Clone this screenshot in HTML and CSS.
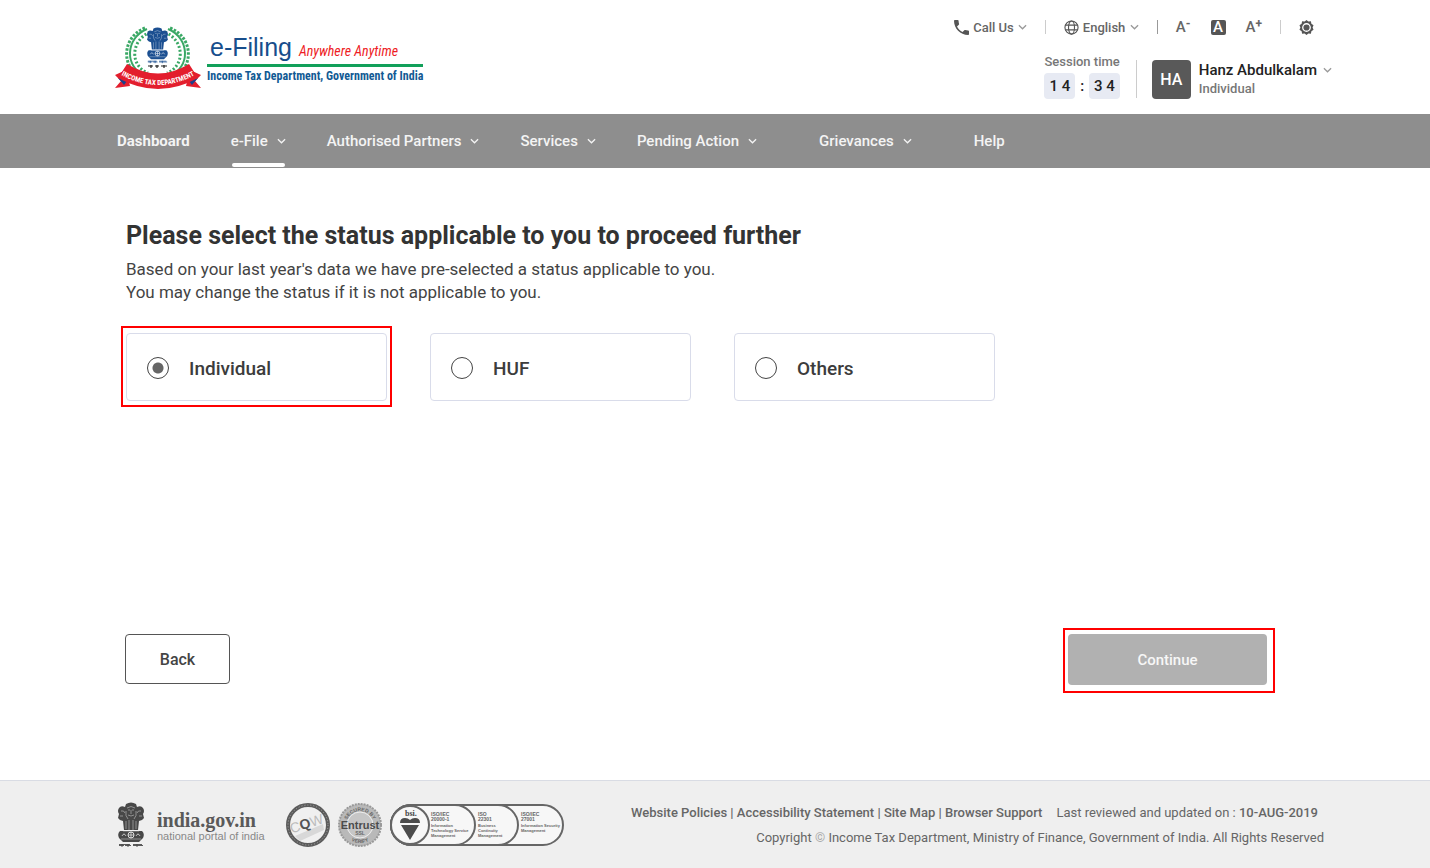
FILE: index.html
```
<!DOCTYPE html>
<html lang="en">
<head>
    <meta charset="UTF-8">
    <meta name="viewport" content="width=device-width, initial-scale=1.0">
    <title>e-Filing - Income Tax Department, Government of India</title>
    <link rel="stylesheet" href="styles.css">
</head>
<body>
    <!-- Shared shapes -->
    <svg class="sprite" aria-hidden="true">
        <symbol id="chevron" viewBox="0 0 10 6">
            <path d="M1 1l4 4 4-4" fill="none" stroke="currentColor" stroke-width="1.4"/>
        </symbol>
        <symbol id="lions" viewBox="0 0 28 46">
            <path d="M9 2q5-3 10 0l1 3q4-2 6 1 2 3 0 6l1 4q-2 3-5 3l-1 9H7l-1-9q-3 0-5-3l1-4q-2-3 0-6 2-3 6-1z" fill="currentColor"/>
            <path d="M3 29q-3 3-1 7l4 4h16l4-4q2-4-1-7z" fill="currentColor"/>
            <path d="M10 6q4-3 8 0M11 8h2M15 8h2M14 8v4M11 13q3 2 6 0M9 9q-1 5 2 8M19 9q1 5-2 8M4 9q3-1 4 2M24 9q-3-1-4 2M3 14h3M25 14h-3M9 19v8M12 18v10M16 18v10M19 19v8M6 29h16M4 37h20" fill="none" stroke="#fff" stroke-opacity=".5" stroke-width=".8"/>
            <circle cx="14" cy="33" r="3" fill="none" stroke="#fff" stroke-opacity=".8"/>
            <path d="M14 30v6M11 33h6M5 34q2-4 4 0M19 34q2-4 4 0" fill="none" stroke="#fff" stroke-opacity=".8" stroke-width=".8"/>
            <path d="M2 43.500h5M8 43.500h6M16 43.500h10M2 42.500h11M16 42.500h9M5 42v3M11 42v3M20 42v3" fill="none" stroke="currentColor" stroke-width=".9"/>
        </symbol>
    </svg>

    <header class="header">
        <a class="logo" href="#">
            <svg class="logo-emblem" viewBox="0 0 86 64" role="img" aria-label="Income Tax Department emblem">
                <g fill="none" stroke="#3aa865">
                    <path d="M32 3C10 12 9 42 31 50l19 6M53 3c22 9 23 39 1 47l-19 6" stroke-width="2"/>
                    <path d="M30 2C5 12 6 45 30 53M55 2c25 10 24 43 0 51" stroke-width="3" stroke-dasharray="2.500 1.500"/>
                    <path d="M35 6C15 15 15 40 33 47M50 6c20 9 20 34 2 41" stroke-width="3" stroke-dasharray="2 2"/>
                </g>
                <svg class="blue" x="30" y="1" width="25" height="37"><use href="#lions"/></svg>
                <path d="M33 40h5M40 40h4M46 40h6M36 39v3M42 39v3M49 39v3" stroke="#222" stroke-width="1.200"/>
                <path d="M0 49l11-5 4 16-15 2 6-7zM86 49l-11-5-4 16 15 2-6-7z" fill="#e31e2d"/>
                <path d="M3 52l9 3-3 4zM83 52l-9 3 3 4z" fill="#1d3f8a"/>
                <path d="M12 38q31 19 62 0l9 14q-40 22-80 0z" fill="#e31e2d"/>
                <path id="ribbon" d="M6 49q37 20 74 0" fill="none"/>
                <text class="ribbon-text"><textPath href="#ribbon" startOffset="50%">INCOME TAX DEPARTMENT</textPath></text>
            </svg>
            <span class="logo-text">
                <span class="logo-title">e-Filing <em>Anywhere Anytime</em></span>
                <span class="logo-dept">Income Tax Department, Government of India</span>
            </span>
        </a>

        <div class="header-right">
            <div class="tools">
                <button class="tool" type="button">
                    <svg class="icon" viewBox="3 3 18 18"><path fill="currentColor" d="M6.620 10.790c1.440 2.830 3.760 5.140 6.590 6.590l2.200-2.200c.27-.27.67-.36 1.020-.24 1.120.37 2.330.57 3.570.57.55 0 1 .45 1 1V20c0 .55-.45 1-1 1C10.610 21 3 13.390 3 4c0-.55.45-1 1-1h3.500c.55 0 1 .45 1 1 0 1.250.2 2.450.57 3.570.11.35.03.74-.25 1.020z"/></svg>
                    Call Us
                    <svg class="chevron"><use href="#chevron"/></svg>
                </button>
                <span class="divider"></span>
                <label class="tool">
                    <svg class="icon" viewBox="0 0 16 16" fill="none" stroke="currentColor" stroke-width="1.200">
                        <circle cx="8" cy="8" r="7"/>
                        <ellipse cx="8" cy="8" rx="3.200" ry="7"/>
                        <path d="M1.500 5.500h13M1.500 10.500h13"/>
                    </svg>
                    <select class="language" aria-label="Language">
                        <option>English</option>
                    </select>
                    <svg class="chevron"><use href="#chevron"/></svg>
                </label>
                <span class="divider dark"></span>
                <div class="font-sizes">
                    <button class="size" type="button" aria-label="Decrease font size">A<sup>-</sup></button>
                    <button class="size normal" type="button" aria-label="Normal font size">A</button>
                    <button class="size" type="button" aria-label="Increase font size">A<sup>+</sup></button>
                </div>
                <span class="divider"></span>
                <button class="tool" type="button" aria-label="Contrast">
                    <svg class="icon" viewBox="0 0 16 16">
                        <path fill="currentColor" d="M8 0l2 1.700 2.700-.3.500 2.600L15.500 5.500 14.500 8l1 2.500-2.300 1.500-.5 2.600-2.700-.3L8 16l-2-1.700-2.700.3-.5-2.600L.5 10.500l1-2.500-1-2.500L2.800 4l.5-2.600 2.700.3z"/>
                        <circle cx="8" cy="8" r="4" fill="none" stroke="#fff" stroke-width="1.400"/>
                    </svg>
                </button>
            </div>

            <div class="account">
                <div class="session">
                    <span>Session time</span>
                    <div class="timer"><b>1 4</b>:<b>3 4</b></div>
                </div>
                <button class="profile" type="button">
                    <span class="avatar">HA</span>
                    <span class="profile-text">
                        <span class="profile-name">Hanz Abdulkalam <svg class="chevron"><use href="#chevron"/></svg></span>
                        <span class="profile-type">Individual</span>
                    </span>
                </button>
            </div>
        </div>
    </header>

    <nav class="nav">
        <a class="bold" href="#">Dashboard</a>
        <a class="active" href="#">e-File <svg class="chevron"><use href="#chevron"/></svg></a>
        <a href="#">Authorised Partners <svg class="chevron"><use href="#chevron"/></svg></a>
        <a href="#">Services <svg class="chevron"><use href="#chevron"/></svg></a>
        <a href="#">Pending Action <svg class="chevron"><use href="#chevron"/></svg></a>
        <a class="spaced" href="#">Grievances <svg class="chevron"><use href="#chevron"/></svg></a>
        <a class="spaced" href="#">Help</a>
    </nav>

    <main class="main">
        <h1>Please select the status applicable to you to proceed further</h1>
        <p>Based on your last year's data we have pre-selected a status applicable to you.<br>
        You may change the status if it is not applicable to you.</p>

        <div class="options" role="radiogroup" aria-label="Status">
            <div class="frame highlight">
                <label class="option"><input type="radio" name="status" checked> Individual</label>
            </div>
            <div class="frame">
                <label class="option"><input type="radio" name="status"> HUF</label>
            </div>
            <div class="frame">
                <label class="option"><input type="radio" name="status"> Others</label>
            </div>
        </div>

        <div class="actions">
            <button class="back" type="button">Back</button>
            <div class="frame highlight next">
                <button class="continue" type="button">Continue</button>
            </div>
        </div>
    </main>

    <footer class="footer">
        <div class="badges">
            <a class="portal" href="#">
                <svg class="portal-emblem"><use href="#lions"/></svg>
                <span class="portal-text">
                    <b>india.gov.in</b>
                    <span>national portal of india</span>
                </span>
            </a>
            <svg class="seal" viewBox="0 0 44 44" role="img" aria-label="CQW certified">
                <circle cx="22" cy="22" r="20" fill="#f0f0f0" stroke="#5c5c5c" stroke-width="4"/>
                <circle cx="22" cy="22" r="20" fill="none" stroke="#aaa" stroke-dasharray="1 2"/>
                <path d="M9 33L37 21l1 6L14 38z" fill="#d8d8d8"/>
                <g transform="rotate(-18 22 22)">
                    <text class="cqw" x="21" y="25">C<tspan class="q">Q</tspan>W</text>
                </g>
            </svg>
            <svg class="seal" viewBox="0 0 44 44" role="img" aria-label="Secured by Entrust">
                <circle cx="22" cy="22" r="21" fill="#b9b9b9" stroke="#999" stroke-width="2" stroke-dasharray="2 1"/>
                <circle cx="22" cy="22" r="13" fill="#c6c6c6" stroke="#eee"/>
                <path id="arc-top" d="M8 22a14 14 0 0 1 28 0" fill="none"/>
                <path id="arc-bottom" d="M4 22a18 18 0 0 0 36 0" fill="none"/>
                <text class="seal-text"><textPath href="#arc-top" startOffset="50%">SECURED BY</textPath></text>
                <text class="entrust" x="22" y="26">Entrust</text>
                <text class="seal-text" x="22" y="32">SSL</text>
                <text class="seal-text"><textPath href="#arc-bottom" startOffset="50%">VERIFY</textPath></text>
            </svg>
            <svg class="bsi" viewBox="0 0 174 42" role="img" aria-label="bsi ISO certifications">
                <g fill="#f7f7f7" stroke="#666" stroke-width="2">
                    <rect x="1" y="1" width="172" height="40" rx="20"/>
                    <rect x="1" y="1" width="127" height="40" rx="20"/>
                    <rect x="1" y="1" width="84" height="40" rx="20"/>
                    <circle cx="20" cy="21" r="19"/>
                </g>
                <text class="bsi-name" x="15" y="12">bsi.</text>
                <path d="M10 19q0-5 5-5 3 0 5 2 2-2 5-2 5 0 5 5zM11 21h18l-9 15z" fill="#4c4c4c"/>
                <g class="bsi-text">
                    <text x="41" y="12">ISO/IEC</text><text x="41" y="17">20000-1</text>
                    <text class="small" x="41" y="23">Information</text><text class="small" x="41" y="28">Technology Service</text><text class="small" x="41" y="33">Management</text>
                    <text x="88" y="12">ISO</text><text x="88" y="17">22301</text>
                    <text class="small" x="88" y="23">Business</text><text class="small" x="88" y="28">Continuity</text><text class="small" x="88" y="33">Management</text>
                    <text x="131" y="12">ISO/IEC</text><text x="131" y="17">27001</text>
                    <text class="small" x="131" y="23">Information Security</text><text class="small" x="131" y="28">Management</text>
                </g>
            </svg>
        </div>

        <div class="footer-text">
            <div class="links">
                <div><a href="#">Website Policies</a> | <a href="#">Accessibility Statement</a> | <a href="#">Site Map</a> | <a href="#">Browser Support</a></div>
                <span>Last reviewed and updated on : <b>10-AUG-2019</b></span>
            </div>
            <div class="copyright">Copyright <span>©</span> Income Tax Department, Ministry of Finance, Government of India. All Rights Reserved</div>
        </div>
    </footer>
</body>
</html>
```
FILE: styles.css
```
* {
    box-sizing: border-box;
}

body {
    margin: 0;
    min-height: 100vh;
    display: flex;
    flex-direction: column;
    font-family: Roboto, sans-serif;
    color: #333;
    background: #fff;
}

a {
    color: inherit;
    text-decoration: none;
}

button,
select {
    font: inherit;
    color: inherit;
    background: none;
    border: none;
    padding: 0;
    cursor: pointer;
}

.sprite {
    display: none;
}

.chevron {
    width: 9px;
    height: 6px;
    flex: none;
}

/* Header */
.header {
    display: flex;
    justify-content: space-between;
    height: 114px;
    padding: 16px 98px 0 115px;
}

.logo {
    display: flex;
    align-items: flex-start;
    gap: 6px;
    padding-top: 10px;
}

.logo-emblem {
    width: 86px;
    height: 64px;
}

.blue {
    color: #1b4f91;
}

.ribbon-text {
    font: bold 7px "Roboto Condensed", Roboto, sans-serif;
    fill: #fff;
    text-anchor: middle;
}

.logo-text {
    display: flex;
    flex-direction: column;
    padding-top: 8px;
    white-space: nowrap;
}

.logo-title {
    padding: 0 3px;
    font-family: "Liberation Sans", sans-serif;
    font-size: 25px;
    line-height: 26px;
    height: 33px;
    color: #174e8c;
    border-bottom: 3px solid #12a05a;
}

.logo-title em {
    font-family: "Roboto Condensed", Roboto, sans-serif;
    font-size: 14px;
    color: #ee1c25;
}

.logo-dept {
    font-family: "Roboto Condensed", Roboto, sans-serif;
    font-size: 12px;
    font-weight: bold;
    line-height: 18px;
    color: #125a94;
}

.header-right {
    display: flex;
    flex-direction: column;
    align-items: flex-end;
    gap: 16px;
}

.tools {
    display: flex;
    align-items: center;
    gap: 18px;
    height: 22px;
    padding-right: 18px;
    font-size: 13px;
    font-weight: 500;
    color: #666;
}

.tool {
    display: flex;
    align-items: center;
    gap: 4px;
}

.icon {
    width: 15px;
    height: 15px;
    color: #555;
}

.tools .chevron,
.profile .chevron {
    color: #999;
}

.language {
    appearance: none;
}

.divider {
    width: 1px;
    height: 14px;
    background: #ccc;
}

.divider.dark {
    background: #999;
}

.font-sizes {
    display: flex;
    align-items: center;
    gap: 20px;
}

.size {
    display: flex;
    font-size: 15px;
    line-height: 15px;
    font-weight: 500;
}

.size sup {
    font-size: 12px;
    font-weight: bold;
    line-height: 8px;
}

.size.normal {
    width: 15px;
    justify-content: center;
    border-radius: 2px;
    color: #fff;
    background: #555;
}

.account {
    display: flex;
    gap: 16px;
}

.session {
    display: flex;
    flex-direction: column;
    gap: 3px;
    font-size: 13px;
    font-weight: 500;
    line-height: 16px;
    color: #777;
}

.timer {
    display: flex;
    justify-content: space-between;
    align-items: center;
    gap: 4px;
    font-size: 15px;
    color: #222;
}

.timer b {
    padding: 5px;
    font-weight: 500;
    border-radius: 4px;
    background: #e7eaf3;
}

.profile {
    display: flex;
    align-items: center;
    gap: 8px;
    height: 38px;
    margin-top: 6px;
    padding-left: 15px;
    border-left: 1px solid #ccc;
    text-align: left;
}

.avatar {
    width: 39px;
    font-size: 16px;
    font-weight: 500;
    line-height: 39px;
    text-align: center;
    color: #fff;
    border-radius: 4px;
    background: #595959;
}

.profile-text {
    display: flex;
    flex-direction: column;
}

.profile-name {
    display: flex;
    align-items: center;
    gap: 6px;
    font-size: 15px;
    font-weight: 500;
    line-height: 20px;
    color: #222;
}

.profile-type {
    font-size: 13px;
    font-weight: 500;
    line-height: 18px;
    color: #777;
}

/* Navigation */
.nav {
    display: flex;
    gap: 41px;
    height: 54px;
    padding: 0 117px;
    font-size: 15px;
    font-weight: 500;
    color: #f4f4f4;
    background: #8e8e8e;
}

.nav a {
    position: relative;
    display: flex;
    align-items: center;
    gap: 9px;
    white-space: nowrap;
}

.nav .bold {
    font-weight: bold;
}

.nav .active::after {
    content: "";
    position: absolute;
    left: 1px;
    right: 1px;
    bottom: 1px;
    height: 4px;
    border-radius: 2px;
    background: #fff;
}

.nav .spaced {
    margin-left: 21px;
}

/* Content */
.main {
    flex: 1;
    display: flex;
    flex-direction: column;
    padding: 50px 155px 87px 121px;
}

h1 {
    margin: 0;
    padding-left: 5px;
    font-size: 25px;
    line-height: 36px;
}

.main p {
    margin: 4px 0 22px;
    padding-left: 5px;
    font-size: 17px;
    line-height: 23px;
    color: #444;
}

.options {
    display: grid;
    grid-template-columns: repeat(3, 1fr);
    gap: 33px;
    max-width: 879px;
}

.frame {
    padding: 5px 3px 4px;
    border: 2px solid transparent;
}

.frame.highlight {
    border-color: #f00;
}

.option {
    display: flex;
    align-items: center;
    gap: 20px;
    height: 68px;
    padding: 2px 20px 0;
    font-size: 19px;
    font-weight: 500;
    color: #3c3c3c;
    border: 1px solid #d9dcea;
    border-radius: 4px;
}

.option input {
    appearance: none;
    width: 22px;
    height: 22px;
    margin: 0;
    border: 1px solid #444;
    border-radius: 50%;
}

.option input:checked {
    background: radial-gradient(circle, #666 5px, transparent 6px);
}

.actions {
    display: flex;
    justify-content: space-between;
    align-items: flex-start;
    margin-top: auto;
}

.back,
.continue {
    font-size: 16px;
    font-weight: 500;
    border-radius: 4px;
}

.back {
    width: 105px;
    height: 50px;
    margin: 6px 0 0 4px;
    color: #444;
    border: 1px solid #555;
}

.next {
    padding: 4px 6px 6px 3px;
}

.continue {
    display: block;
    width: 199px;
    height: 51px;
    font-size: 15px;
    color: #f7f7f7;
    background: #b1b1b1;
}

/* Footer */
.footer {
    display: flex;
    justify-content: space-between;
    align-items: center;
    height: 88px;
    padding: 0 106px 0 117px;
    color: #666;
    border-top: 1px solid #d9dce4;
    background: #efefef;
}

.badges {
    display: flex;
    align-items: center;
    gap: 8px;
}

.portal {
    display: flex;
    align-items: center;
    gap: 12px;
    margin-right: 13px;
}

.portal-emblem {
    width: 28px;
    height: 46px;
    color: #484848;
}

.portal-text {
    display: flex;
    flex-direction: column;
    padding-top: 4px;
    font-family: "Liberation Sans", sans-serif;
    font-size: 11px;
    line-height: 14px;
    color: #888;
}

.portal-text b {
    font-family: "Liberation Serif", serif;
    font-size: 20px;
    line-height: 18px;
    color: #5a5a5a;
}

.seal {
    width: 44px;
    height: 44px;
}

.cqw {
    font: 14px "Liberation Sans", sans-serif;
    fill: #bbb;
    text-anchor: middle;
}

.cqw .q {
    font-weight: bold;
    fill: #555;
}

.seal-text {
    font: bold 5px "Liberation Sans", sans-serif;
    fill: #666;
    text-anchor: middle;
}

.entrust {
    font: bold 11px "Liberation Sans", sans-serif;
    fill: #4c4c4c;
    text-anchor: middle;
}

.bsi {
    width: 174px;
    height: 42px;
}

.bsi-name {
    font: bold 8px "Liberation Serif", serif;
    fill: #444;
}

.bsi-text {
    font: bold 5px "Liberation Sans", sans-serif;
    fill: #666;
}

.bsi-text .small {
    font-size: 4px;
}

.footer-text {
    font-size: 13px;
    line-height: 25px;
    white-space: nowrap;
}

.links {
    display: flex;
    justify-content: flex-end;
    gap: 14px;
    padding-right: 6px;
}

.links div,
.links b {
    font-weight: 500;
}

.copyright {
    text-align: right;
}

.copyright span {
    color: #aaa;
}
```
